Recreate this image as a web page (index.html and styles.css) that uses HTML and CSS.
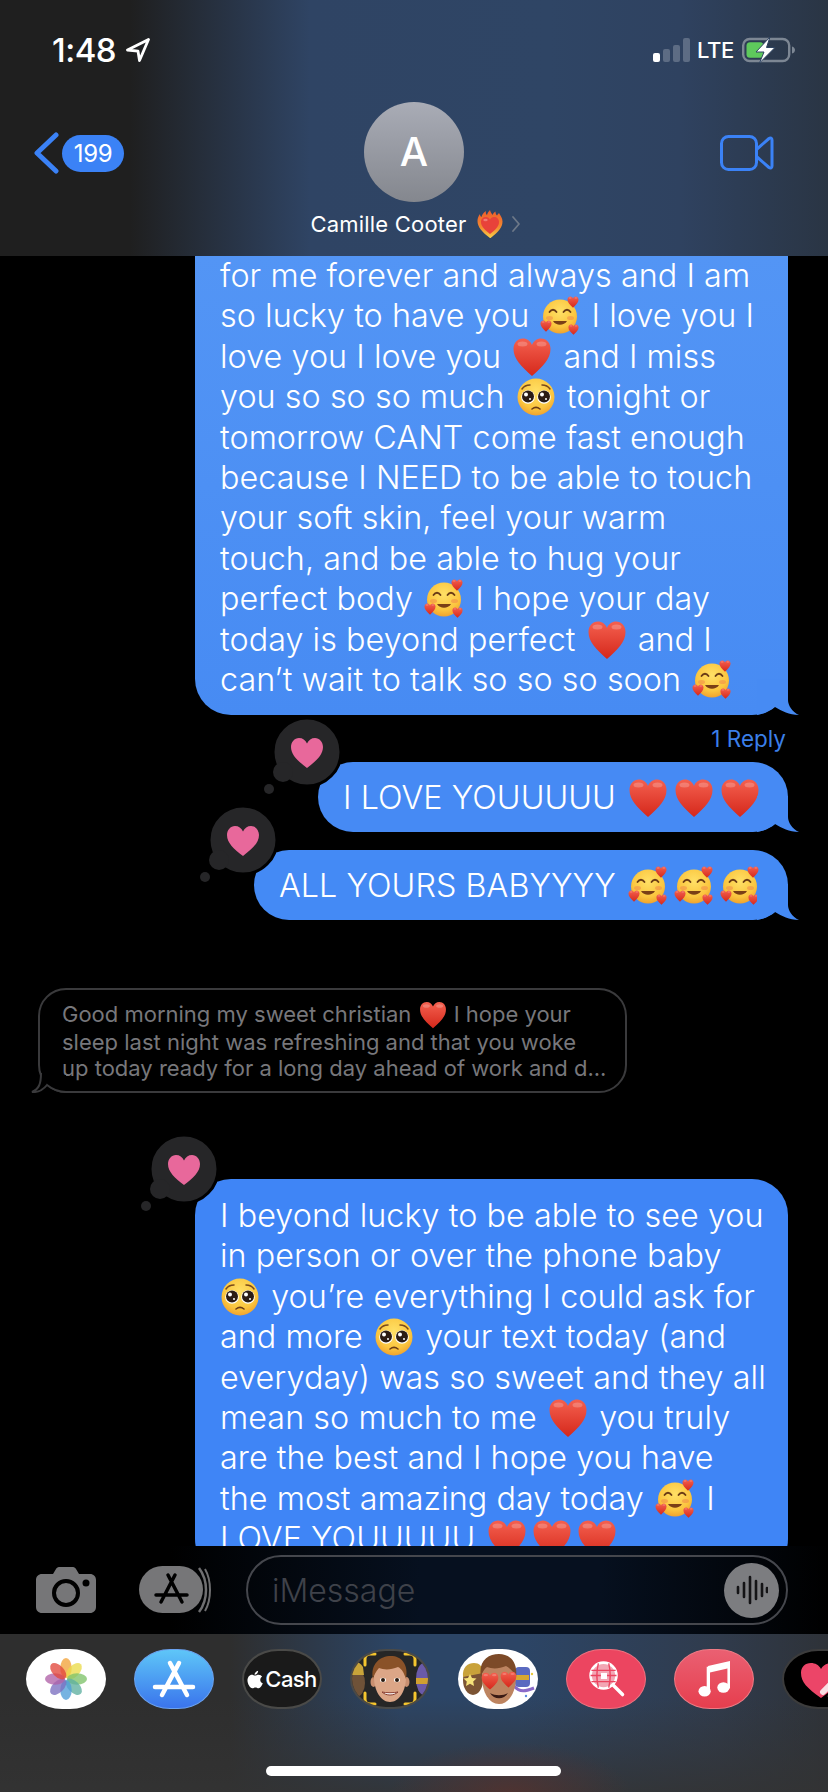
FILE: index.html
```html
<!DOCTYPE html>
<html lang="en">
<head>
<meta charset="utf-8">
<title>Messages</title>
<link rel="stylesheet" href="styles.css">
</head>
<body>
<svg class="sprite" aria-hidden="true">
  <defs>
    <linearGradient id="redg" x1="0" y1="0" x2="0" y2="1"><stop offset="0" stop-color="#f4604f"/><stop offset="1" stop-color="#d5281b"/></linearGradient>
    <radialGradient id="yelg" cx="0.5" cy="0.35" r="0.7"><stop offset="0" stop-color="#ffe066"/><stop offset="0.65" stop-color="#fbc63f"/><stop offset="1" stop-color="#ee9a2a"/></radialGradient>
    <linearGradient id="firel" x1="0" y1="0" x2="0" y2="1"><stop offset="0" stop-color="#ee5a2c"/><stop offset="0.6" stop-color="#f28a30"/><stop offset="1" stop-color="#f8d24a"/></linearGradient>
    <symbol id="heart" viewBox="0 0 40 40">
      <path fill="url(#redg)" d="M20 39C9 29 1.500 22 1.500 12 1.500 6 5.500 1.500 11 1.500c4 0 7.500 2.500 9 6.500 1.500-4 5-6.500 9-6.500 5.500 0 9.500 4.500 9.500 10.500 0 10-7.500 17-18.500 27z"/>
      <ellipse cx="10.500" cy="7" rx="5" ry="2.500" fill="#fff" opacity=".22"/>
      <ellipse cx="29.500" cy="7" rx="5" ry="2.500" fill="#fff" opacity=".22"/>
    </symbol>
    <symbol id="love" viewBox="0 0 40 40">
      <circle cx="20" cy="20.500" r="17" fill="url(#yelg)"/>
      <path d="M9.500 16c2-3 5-3 7 0M23.500 16c2-3 5-3 7 0" fill="none" stroke="#6b3c16" stroke-width="1.800" stroke-linecap="round"/>
      <path d="M13 25c3 5 11 5 14 0z" fill="#7a3f16"/>
      <ellipse cx="9.500" cy="22" rx="3.500" ry="2" fill="#f08a4a" opacity=".55"/>
      <ellipse cx="30.500" cy="22" rx="3.500" ry="2" fill="#f08a4a" opacity=".55"/>
      <use href="#heart" x="27" y="0" width="12" height="12"/>
      <use href="#heart" x="0" y="24" width="12" height="12"/>
      <use href="#heart" x="28" y="28" width="11" height="11"/>
    </symbol>
    <symbol id="plead" viewBox="0 0 40 40">
      <circle cx="20" cy="20" r="18.500" fill="url(#yelg)"/>
      <path d="M6 12c2-3 5-4 8-4M34 12c-2-3-5-4-8-4" fill="none" stroke="#7a4a1a" stroke-width="1.500" stroke-linecap="round"/>
      <circle cx="12" cy="20" r="6.800" fill="#fff"/><circle cx="28" cy="20" r="6.800" fill="#fff"/>
      <circle cx="12" cy="19.500" r="6" fill="#2b1c14"/><circle cx="28" cy="19.500" r="6" fill="#2b1c14"/>
      <circle cx="10" cy="17.500" r="2" fill="#fff"/><circle cx="26" cy="17.500" r="2" fill="#fff"/>
      <circle cx="14" cy="22" r="1" fill="#fff"/><circle cx="30" cy="22" r="1" fill="#fff"/>
      <path d="M16 32c2.500-2 5.500-2 8 0" fill="none" stroke="#6b3c16" stroke-width="1.600" stroke-linecap="round"/>
    </symbol>
    <symbol id="tapback" viewBox="0 0 76 75">
      <circle cx="43" cy="33" r="34" fill="#262628" stroke="#000" stroke-width="3"/>
      <circle cx="19" cy="53" r="10" fill="#262628"/>
      <circle cx="5" cy="70" r="5" fill="#262628"/>
      <path d="M43 49C34 42 27 36 27 28c0-5 3.500-9 8-9 3.500 0 6.500 2 8 5.500 1.500-3.500 4.500-5.500 8-5.500 4.500 0 8 4 8 9 0 8-7 14-16 21z" fill="#e8689b"/>
    </symbol>
    <symbol id="tail" viewBox="-17 -16 42 36">
      <path d="M14-16V5C14 10 18 17 25 20 15 20 8 16 1 12-4 16-10 19-17 20V-16z"/>
    </symbol>
  </defs>
</svg>

<div class="phone">
  <header class="head">
    <div class="status">
      <div class="clock">
        <span class="time">1:48</span>
        <svg class="loc" viewBox="0 0 24 24"><path d="M22.500 1.500 1.500 12l10.500 1.200L13.500 22.500z" fill="none" stroke="#fff" stroke-width="2.800" stroke-linejoin="round"/></svg>
      </div>
      <div class="sys">
        <div class="bars"><i class="b1"></i><i class="b2"></i><i class="b3"></i><i class="b4"></i></div>
        <span class="lte">LTE</span>
        <svg class="batt" viewBox="0 0 54 26">
          <rect x="1.200" y="2" width="46" height="22" rx="6.500" fill="none" stroke="#7d8794" stroke-width="2.400"/>
          <rect x="4.500" y="5.200" width="17" height="15.600" rx="3.500" fill="#5ec95c"/>
          <path d="M50 9.500c2 .5 3 2 3 3.500s-1 3-3 3.500z" fill="#7d8794"/>
          <path d="M28 0 14 15h8l-4.500 11L33 10.500h-8.500z" fill="#fff" stroke="#2f4462" stroke-width="1"/>
        </svg>
      </div>
    </div>
    <nav class="nav">
      <div class="back">
        <svg class="chev" viewBox="0 0 26 42"><path d="M23 3 4 21l19 18" fill="none" stroke="#3b82f6" stroke-width="5" stroke-linecap="round" stroke-linejoin="round"/></svg>
        <span class="badge">199</span>
      </div>
      <div class="contact">
        <div class="avatar">A</div>
        <div class="name">
          <span>Camille Cooter</span>
          <svg class="fireheart" viewBox="0 0 26 28">
            <path d="M13 28C5 22 .5 17 .5 11 .5 8 1.500 6 3 4c0 1.500.5 2.500 1.500 3C5 4.500 6.500 2.500 9 1c-.5 2 0 3 1 4 .7-2 1.500-3.500 3-5 .5 2 1.500 3.500 2.500 5 .7-1.500 1.500-2.500 3-3.500 0 2 .5 3 1.500 4 .5-.8 1-1.500 2-2.500 1.500 2.500 3.500 5 3.500 8.500 0 6-4.500 11-12.500 17z" fill="url(#firel)"/>
            <path d="M13 24C7 19.500 4 16 4 12c0-3 2-5 5-5 2 0 3.200 1 4 2.500C13.800 8 15 7 17 7c3 0 5 2 5 5 0 4-3 7.500-9 12z" fill="#e8423a"/>
            <ellipse cx="8.500" cy="10" rx="2.200" ry="1.200" fill="#fff" opacity=".3"/>
          </svg>
          <svg class="more" viewBox="0 0 10 18"><path d="M2 2l6 7-6 7" fill="none" stroke="#6d7888" stroke-width="1.800" stroke-linecap="round" stroke-linejoin="round"/></svg>
        </div>
      </div>
      <div class="video">
        <svg class="cam" viewBox="0 0 54 36"><rect x="1.500" y="1.500" width="35" height="33" rx="7" fill="none" stroke="#3b82f6" stroke-width="3"/><path d="M37 14 49 3.500c1.500-1 3-.5 3 1.500v26c0 2-1.500 2.500-3 1.500L37 22" fill="none" stroke="#3b82f6" stroke-width="3" stroke-linejoin="round"/></svg>
      </div>
    </nav>
  </header>

  <main class="thread">
    <div class="bubble first">
      for me forever and always and I am<br>
      so lucky to have you <svg class="em"><use href="#love"/></svg> I love you I<br>
      love you I love you <svg class="em"><use href="#heart"/></svg> and I miss<br>
      you so so so much <svg class="em"><use href="#plead"/></svg> tonight or<br>
      tomorrow CANT come fast enough<br>
      because I NEED to be able to touch<br>
      your soft skin, feel your warm<br>
      touch, and be able to hug your<br>
      perfect body <svg class="em"><use href="#love"/></svg> I hope your day<br>
      today is beyond perfect <svg class="em"><use href="#heart"/></svg> and I<br>
      can’t wait to talk so so so soon <svg class="em"><use href="#love"/></svg>
      <svg class="tail tail-a"><use href="#tail"/></svg>
    </div>
    <div class="reply">1 Reply</div>
    <div class="bubble mid">
      <svg class="tap"><use href="#tapback"/></svg>
      I LOVE YOUUUUU <svg class="em tight"><use href="#heart"/></svg><svg class="em tight"><use href="#heart"/></svg><svg class="em tight"><use href="#heart"/></svg>
      <svg class="tail tail-b"><use href="#tail"/></svg>
    </div>
    <div class="bubble low">
      <svg class="tap"><use href="#tapback"/></svg>
      ALL YOURS BABYYYY <svg class="em tight"><use href="#love"/></svg><svg class="em tight"><use href="#love"/></svg><svg class="em tight"><use href="#love"/></svg>
      <svg class="tail tail-c"><use href="#tail"/></svg>
    </div>
    <div class="quote">
      Good morning my sweet christian <svg class="em small"><use href="#heart"/></svg> I hope your<br>
      sleep last night was refreshing and that you woke<br>
      up today ready for a long day ahead of work and d...
      <svg class="qtail" viewBox="0 0 40 24"><path d="M13 6 36 6V23C27 23 22 20 17 16 13 21 8 23.500 2 23 9 20 11 15 11 4z" fill="#000"/><path d="M11 4C11 15 9 20 2 23 8 23.500 13 21 17 16 22 20 27 23 36 23" fill="none" stroke="#3a3a3c" stroke-width="2"/></svg>
    </div>
    <div class="bubble last">
      <svg class="tap"><use href="#tapback"/></svg>
      I beyond lucky to be able to see you<br>
      in person or over the phone baby<br>
      <svg class="em lead"><use href="#plead"/></svg> you’re everything I could ask for<br>
      and more <svg class="em"><use href="#plead"/></svg> your text today (and<br>
      everyday) was so sweet and they all<br>
      mean so much to me <svg class="em"><use href="#heart"/></svg> you truly<br>
      are the best and I hope you have<br>
      the most amazing day today <svg class="em"><use href="#love"/></svg> I<br>
      LOVE YOUUUUU <svg class="em tail-row"><use href="#heart"/></svg><svg class="em tail-row"><use href="#heart"/></svg><svg class="em tail-row"><use href="#heart"/></svg>
    </div>
  </main>

  <section class="composer">
    <svg class="camera" viewBox="0 0 60 46">
      <path d="M6 7h11l3-5c.6-1 1.500-2 3-2h14c1.500 0 2.400 1 3 2l3 5h11c3.500 0 6 2.500 6 6v27c0 3.500-2.500 6-6 6H6c-3.500 0-6-2.500-6-6V13c0-3.500 2.500-6 6-6z" fill="#767678"/>
      <circle cx="30" cy="26" r="12" fill="none" stroke="#000" stroke-width="4"/>
      <circle cx="50" cy="16" r="3.500" fill="#000"/>
    </svg>
    <svg class="apps" viewBox="0 0 72 48">
      <path d="M66 3c3.500 6 5 13 5 21s-1.500 15-5 21" fill="none" stroke="#6f6f71" stroke-width="2"/>
      <path d="M60 2c4.500 6 7 13 7 22s-2.500 16-7 22" fill="none" stroke="#6f6f71" stroke-width="2.500"/>
      <rect x="0" y="0" width="64" height="47" rx="23.500" fill="#767678"/>
      <path d="M36 9 22 36M29 9 43 36M17 29h31" fill="none" stroke="#000" stroke-width="3.500" stroke-linecap="round"/>
    </svg>
    <div class="field">
      <span class="placeholder">iMessage</span>
      <div class="audio">
        <svg class="wave" viewBox="0 0 32 32"><path d="M2 13v6M8 9v14M14 3v26M20 7v18M26 10v12M31 14v4" fill="none" stroke="#141416" stroke-width="2.600" stroke-linecap="round"/></svg>
      </div>
    </div>
  </section>

  <section class="tray">
    <div class="strip">
      <div class="pill white">
        <svg class="ic-photos" viewBox="0 0 44 44">
          <g fill-opacity=".78">
            <ellipse cx="22" cy="10.500" rx="6" ry="10.500" fill="#f2a33a"/>
            <ellipse cx="22" cy="10.500" rx="6" ry="10.500" fill="#eadb4a" transform="rotate(45 22 22)"/>
            <ellipse cx="22" cy="10.500" rx="6" ry="10.500" fill="#7fc36a" transform="rotate(90 22 22)"/>
            <ellipse cx="22" cy="10.500" rx="6" ry="10.500" fill="#5fb0a0" transform="rotate(135 22 22)"/>
            <ellipse cx="22" cy="10.500" rx="6" ry="10.500" fill="#4f9ed8" transform="rotate(180 22 22)"/>
            <ellipse cx="22" cy="10.500" rx="6" ry="10.500" fill="#7b6fc0" transform="rotate(225 22 22)"/>
            <ellipse cx="22" cy="10.500" rx="6" ry="10.500" fill="#b061a8" transform="rotate(270 22 22)"/>
            <ellipse cx="22" cy="10.500" rx="6" ry="10.500" fill="#e2483c" transform="rotate(315 22 22)"/>
          </g>
        </svg>
      </div>
      <div class="pill store">
        <svg class="ic-store" viewBox="0 0 44 40"><path d="M27 4 10 36M18 4 35 36M3 28h38" fill="none" stroke="#fff" stroke-width="4.500" stroke-linecap="round"/></svg>
      </div>
      <div class="pill cash">
        <svg class="ic-apple" viewBox="0 0 20 24"><path d="M14 1c0 3-2 5-4.500 5C9.500 3.500 11.500 1.500 14 1zM10 7c1.300 0 2.700-1 4.500-1 2 0 3.700 1 4.500 2.600-3.500 2-3 6.800.8 8.200-1 2.800-3 6.200-5.200 6.200-1.500 0-2.300-1-4-1s-2.600 1-4 1C3.800 23 .5 17.500.5 13.300.5 9 3.300 6 6 6c1.600 0 3 1 4 1z" fill="#fff"/></svg>
        <span>Cash</span>
      </div>
      <div class="pill memo">
        <svg class="ic-fill" viewBox="0 0 80 60">
          <ellipse cx="6" cy="34" rx="9" ry="14" fill="#6f5238"/>
          <path d="M-2 22C0 12 8 10 13 18l1 8H-2z" fill="#c9a43a"/>
          <ellipse cx="74" cy="30" rx="8" ry="16" fill="#6a5aa8"/>
          <rect x="66" y="29" width="14" height="6" fill="#d0a030"/>
          <path d="M25 5h-5c-3 0-5 2-5 5v6M55 5h5c3 0 5 2 5 5v6M25 55h-5c-3 0-5-2-5-5v-6M55 55h5c3 0 5-2 5-5v-6" fill="none" stroke="#f5c52e" stroke-width="3" stroke-linecap="round"/>
          <ellipse cx="23.500" cy="33" rx="3" ry="5" fill="#c98f70"/><ellipse cx="56.500" cy="33" rx="3" ry="5" fill="#c98f70"/>
          <path d="M24 28c0 14 7 25 16 25s16-11 16-25S49 12 40 12s-16 2-16 16z" fill="#dca687"/>
          <path d="M23 30C20 15 30 7 41 7c10 0 18 8 15 23-2-6-4-10-8-12-7 3-14 3-19 1-3 3-5 7-6 11z" fill="#8a5228"/>
          <ellipse cx="33" cy="31" rx="3" ry="2.200" fill="#fff"/><ellipse cx="47" cy="31" rx="3" ry="2.200" fill="#fff"/>
          <circle cx="33" cy="31" r="2" fill="#2a1a10"/><circle cx="47" cy="31" r="2" fill="#2a1a10"/>
          <path d="M32 43c4 4 12 4 16 0-4 1-12 1-16 0z" fill="#fff" stroke="#8a3f30" stroke-width="1"/>
        </svg>
      </div>
      <div class="pill white">
        <svg class="ic-fill" viewBox="0 0 80 60">
          <ellipse cx="15" cy="31" rx="10" ry="15" fill="#7c5434"/>
          <path d="M5 28C4 18 10 14 16 14c5 0 9 3 9 10z" fill="#c9a23a"/>
          <path d="M12 25l2 4 4.500.5-3.300 3 .8 4.500-4-2.200-4 2.200.8-4.500-3.300-3L10 29z" fill="#f6e27a"/>
          <rect x="57" y="18" width="15" height="20" rx="4" fill="#5a6ac0"/>
          <rect x="58" y="26" width="13" height="5" fill="#d8a830"/>
          <path d="M56 37c6 7 12 5 20 2" fill="none" stroke="#8a6ac8" stroke-width="3"/>
          <circle cx="74" cy="25" r="1.200" fill="#e8c83a"/><circle cx="68" cy="47" r="1.200" fill="#5a8ae0"/>
          <path d="M24 28c0 15 7 27 17 27s17-12 17-27S51 10 41 10 24 13 24 28z" fill="#bd8460"/>
          <path d="M23 28C20 12 30 5 41 5c11 0 19 8 17 23-3-6-6-9-10-11-7 3-14 3-19 1-3 2-5 6-6 10z" fill="#7c4a28"/>
          <use href="#heart" x="23" y="23" width="18" height="18"/>
          <use href="#heart" x="42" y="22" width="17" height="17"/>
          <path d="M32 44c5 3 13 3 18 0-4 7-14 7-18 0z" fill="#3a1a14"/>
        </svg>
      </div>
      <div class="pill rose">
        <svg class="ic-globe" viewBox="0 0 44 44">
          <circle cx="18" cy="18" r="15" fill="#f2a6b4" stroke="#fff" stroke-width="3"/>
          <path d="M4 12h28M3 18h30M4 25h28M12 4c-2 8-2 20 0 28M24 4c2 8 2 20 0 28" fill="none" stroke="#ec4560" stroke-width="1.600"/>
          <rect x="15" y="15" width="7" height="7" fill="#fff"/>
          <path d="M29 29 40 40" stroke="#fff" stroke-width="4" stroke-linecap="round"/>
        </svg>
      </div>
      <div class="pill music">
        <svg class="ic-note" viewBox="0 0 34 40"><path d="M11 8 33 3v27" fill="none" stroke="#fff" stroke-width="3.500"/><path d="M11 7v26" fill="none" stroke="#fff" stroke-width="3.500"/><path d="M11 11 33 6" stroke="#fff" stroke-width="5"/><ellipse cx="7" cy="33" rx="6.500" ry="5.500" fill="#fff"/><ellipse cx="27" cy="29" rx="6.500" ry="5.500" fill="#fff"/></svg>
      </div>
      <div class="pill dark">
        <svg class="ic-hands" viewBox="0 0 46 46"><path d="M22 42C8 32 2 26 2 17 2 11 6 7 12 7c4 0 8 2 10 6 2-4 6-6 10-6 6 0 10 4 10 10 0 9-6 15-20 25z" fill="#ec4568"/><path d="M24 36 40 20M32 40 44 26" stroke="#f8dfe4" stroke-width="6" stroke-linecap="round"/></svg>
      </div>
    </div>
    <div class="home"></div>
  </section>
</div>
</body>
</html>
```

FILE: styles.css
```css
* { box-sizing: border-box; }
html, body { margin: 0; padding: 0; background: #000; }
body { width: 828px; height: 1792px; overflow: hidden; font-family: Inter, "Liberation Sans", sans-serif; color: #fff; }
.sprite { width: 0; height: 0; display: block; }
.phone { width: 828px; height: 1792px; display: flex; flex-direction: column; }

/* header */
.head { height: 256px; flex: none; background: linear-gradient(90deg, #1f1f1f 0, #1f1f1f 130px, #2f4464 310px, #2f4565 550px, #2f4260 680px, #2a3544 828px); display: flex; flex-direction: column; }
.status { height: 100px; flex: none; display: flex; justify-content: space-between; align-items: center; padding: 0 32px 0 52px; }
.clock { display: flex; align-items: center; gap: 10px; }
.time { font-size: 33px; font-weight: 500; letter-spacing: -.5px; }
.loc { width: 24px; height: 24px; }
.sys { display: flex; align-items: center; }
.bars { display: flex; align-items: flex-end; gap: 3px; height: 24px; margin-right: 7px; }
.bars i { display: block; width: 7px; border-radius: 2px; background: #5d6c84; }
.b1 { height: 9px; background: #fff !important; }
.b2 { height: 13px; }
.b3 { height: 17px; }
.b4 { height: 24px; }
.lte { font-size: 22px; font-weight: 500; margin-right: 8px; letter-spacing: -.3px; }
.batt { width: 54px; height: 26px; }
.nav { flex: 1; display: grid; grid-template-columns: 1fr auto 1fr; align-items: start; padding: 2px 0 0; }
.back { display: flex; align-items: center; gap: 3px; padding: 30px 0 0 33px; }
.chev { width: 26px; height: 42px; }
.badge { width: 62px; height: 37px; border-radius: 19px; background: #3b82f6; font-size: 24px; text-align: center; line-height: 37px; letter-spacing: -.4px; }
.contact { display: flex; flex-direction: column; align-items: center; }
.avatar { width: 100px; height: 100px; border-radius: 50%; background: linear-gradient(180deg, #a9acb6, #84878e); font-size: 40px; font-weight: 500; text-align: center; line-height: 100px; }
.name { display: flex; align-items: center; font-size: 22px; height: 30px; margin-top: 7px; margin-left: 3px; letter-spacing: .2px; }
.fireheart { width: 26px; height: 28px; margin-left: 10px; }
.more { width: 10px; height: 18px; margin-left: 8px; }
.video { display: flex; justify-content: flex-end; padding: 33px 54px 0 0; }
.cam { width: 54px; height: 36px; }

/* thread */
.thread { flex: 1; min-height: 0; overflow: hidden; display: flex; flex-direction: column; align-items: flex-end; padding-right: 40px; }
.bubble { position: relative; flex: none; font-size: 32.300px; font-weight: 350; letter-spacing: .06px; line-height: 40.400px; padding: 16px 25px 15px; border-radius: 36px; white-space: nowrap; }
.first { width: 593px; height: 459px; padding-top: 0; border-radius: 0 0 36px 36px; background: linear-gradient(180deg, #5395f5, #478bf3); color: #fff; }
.mid { width: 470px; height: 70px; background: #468af4; }
.low { width: 534px; height: 70px; background: #448af5; margin-top: 18px; }
.last { width: 593px; padding-top: 17px; background: #3f85f6; margin-top: 86px; }
.reply { flex: none; height: 47px; line-height: 47px; font-size: 22.500px; color: #3b7fe8; padding-right: 2px; }
.em { display: inline-block; width: 40px; height: 40px; vertical-align: -9px; margin: 0 2px; }
.em.tight { margin: 0 3px; }
.em.tail-row { margin: 0 2.500px; }
.em.lead { margin-left: 0; }
.em.small { width: 28px; height: 28px; vertical-align: -7px; margin: 0 1px; }
.tap { position: absolute; left: -54px; top: -43px; width: 76px; height: 75px; }
.tail { position: absolute; right: -11px; bottom: 0; width: 42px; height: 36px; }
.tail-a { fill: #478bf3; }
.tail-b { fill: #468af4; }
.tail-c { fill: #448af5; }

/* quoted */
.quote { position: relative; flex: none; align-self: flex-start; width: 589px; height: 105px; margin: 68px 0 0 38px; padding: 11px 0 0 22px; border: 2px solid #3a3a3c; border-radius: 28px; font-size: 22px; line-height: 26.300px; color: #77777b; white-space: nowrap; }
.qtail { position: absolute; left: -10px; bottom: -2px; width: 40px; height: 24px; }

/* composer */
.composer { height: 88px; flex: none; display: flex; align-items: center; padding: 0 40px 0 36px; background: linear-gradient(90deg, #000 0, #000 170px, #06101f 420px, #06101f 600px, #000 828px); }
.camera { width: 60px; height: 46px; flex: none; }
.apps { width: 72px; height: 48px; flex: none; margin-left: 43px; }
.field { flex: 1; height: 70px; margin-left: 35px; border: 2px solid #45474d; border-radius: 35px; display: flex; align-items: center; justify-content: space-between; padding: 0 7px 0 24px; }
.placeholder { font-size: 32px; font-weight: 350; color: #3f424a; }
.audio { width: 55px; height: 55px; border-radius: 50%; background: #7c7d80; display: flex; align-items: center; justify-content: center; }
.wave { width: 32px; height: 32px; }

/* tray */
.tray { height: 158px; flex: none; display: flex; flex-direction: column; justify-content: space-between; padding: 15px 0 16px; background: radial-gradient(120px 50px at 510px 158px, rgba(90,50,45,.7), rgba(90,50,45,0)), linear-gradient(180deg, rgba(51,51,51,0) 40%, rgba(51,51,51,.85) 100%), linear-gradient(90deg, #2e2e2e 0, #2e2e2e 230px, #2c4566 400px, #2c4566 520px, #303b4c 720px, #2e3238 828px); }
.strip { display: flex; gap: 28px; padding-left: 26px; overflow: hidden; }
.pill { width: 80px; height: 60px; flex: none; border-radius: 36px / 30px; display: flex; align-items: center; justify-content: center; overflow: hidden; }
.white { background: #fff; }
.store { background: linear-gradient(180deg, #5ec6f8, #3a74ec); border: 1px solid #6aa2f0; }
.cash { background: #1a1a1a; border: 2px solid #4a4a48; gap: 1px; font-size: 22px; font-weight: 500; letter-spacing: -.6px; }
.memo { background: #262626; border: 2px solid #4a4a48; }
.rose { background: #ec4560; border: 1px solid #f0707e; }
.music { background: linear-gradient(180deg, #ea6072, #e63e4e); border: 1px solid #f07a84; }
.dark { background: #000; border: 2px solid #3c3c3c; }
.ic-photos { width: 42px; height: 42px; }
.ic-store { width: 44px; height: 40px; }
.ic-apple { width: 16px; height: 19px; margin-right: 1px; }
.ic-fill { width: 80px; height: 60px; flex: none; }
.ic-globe { width: 38px; height: 38px; margin-left: 2px; }
.ic-note { width: 32px; height: 38px; }
.ic-hands { width: 46px; height: 46px; }
.home { width: 295px; height: 10px; border-radius: 5px; background: #fff; align-self: center; margin-left: -1px; }
```
